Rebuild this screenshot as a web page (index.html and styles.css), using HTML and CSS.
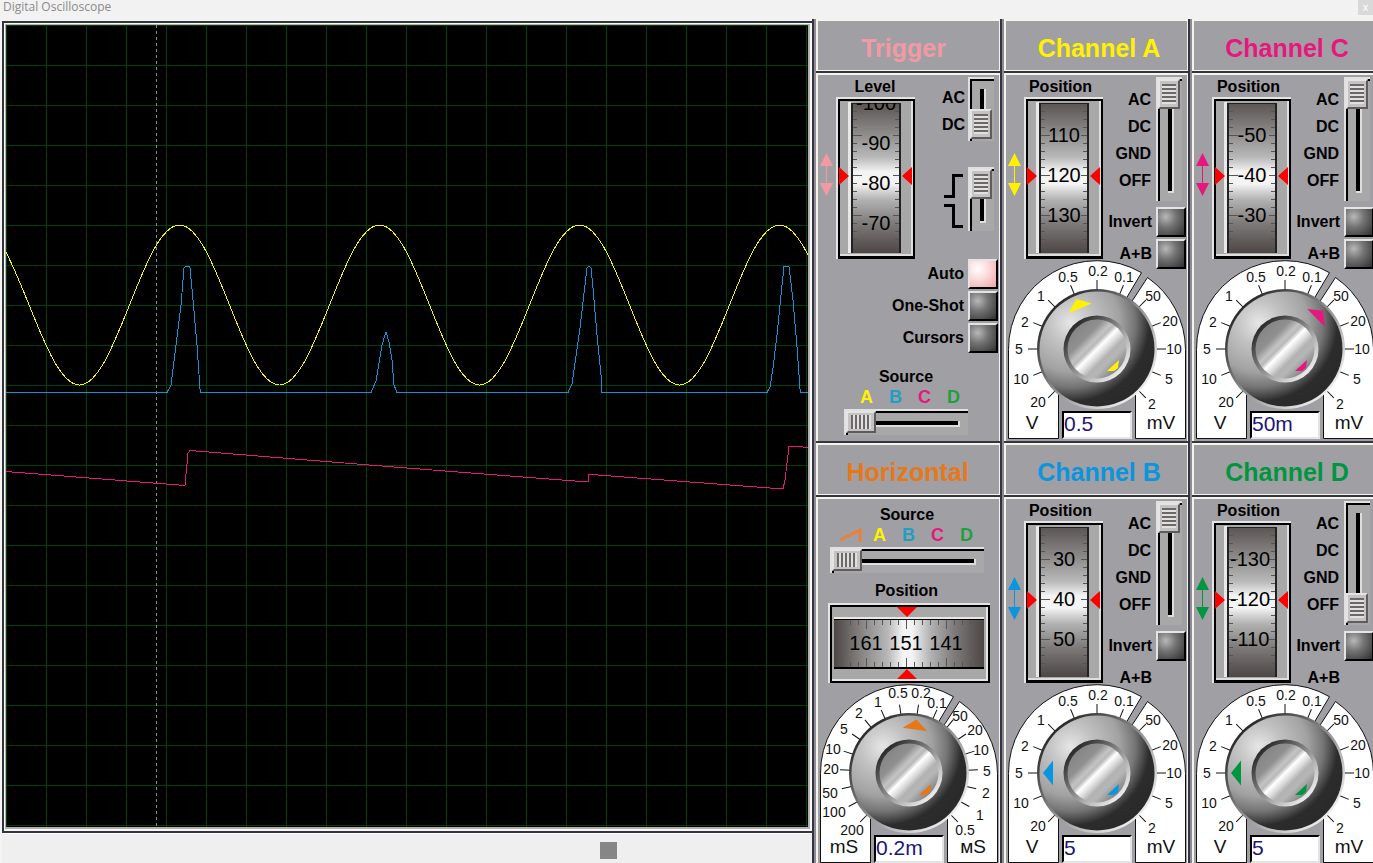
FILE: index.html
```html
<!DOCTYPE html>
<html lang="en">
<head>
<meta charset="utf-8">
<title>Digital Oscilloscope</title>
<link rel="stylesheet" href="styles.css">
</head>
<body>
<svg class="defs" aria-hidden="true">
  <defs>
    <pattern id="grid" width="40" height="40" patternUnits="userSpaceOnUse">
      <path d="M0 0H40V1H1V40H0Z" fill="#004000"/>
    </pattern>
    <linearGradient id="drum-v" x1="0" y1="0" x2="0" y2="1">
      <stop offset="0" stop-color="#5a5452"/><stop offset=".2" stop-color="#8c8a89"/><stop offset=".36" stop-color="#b8b8b8"/>
      <stop offset=".46" stop-color="#f4f4f4"/><stop offset=".54" stop-color="#f4f4f4"/><stop offset=".64" stop-color="#b4b4b4"/>
      <stop offset=".8" stop-color="#7e7b7a"/><stop offset="1" stop-color="#4c4644"/>
    </linearGradient>
    <linearGradient id="drum-h" x1="0" y1="0" x2="1" y2="0">
      <stop offset="0" stop-color="#4c4644"/><stop offset=".2" stop-color="#8c8a89"/><stop offset=".36" stop-color="#b8b8b8"/>
      <stop offset=".46" stop-color="#f4f4f4"/><stop offset=".52" stop-color="#f4f4f4"/><stop offset=".64" stop-color="#b4b4b4"/>
      <stop offset=".8" stop-color="#7e7b7a"/><stop offset="1" stop-color="#4c4644"/>
    </linearGradient>
    <radialGradient id="knob-body" cx=".27" cy=".27" r=".78">
      <stop offset="0" stop-color="#e6e6e6"/><stop offset=".25" stop-color="#c2c2c2"/><stop offset=".55" stop-color="#a2a2a2"/>
      <stop offset=".72" stop-color="#757575"/><stop offset=".88" stop-color="#2c2c2c"/><stop offset="1" stop-color="#2a2a2a"/>
    </radialGradient>
    <linearGradient id="ring" x1=".15" y1=".15" x2=".85" y2=".85">
      <stop offset="0" stop-color="#2a2a2a"/><stop offset=".5" stop-color="#8e8e8e"/><stop offset="1" stop-color="#ececec"/>
    </linearGradient>
    <linearGradient id="cap" x1=".15" y1=".15" x2=".85" y2=".85">
      <stop offset="0" stop-color="#868686"/><stop offset=".22" stop-color="#909090"/><stop offset=".36" stop-color="#c4c4c4"/>
      <stop offset=".42" stop-color="#b8b8b8"/><stop offset=".5" stop-color="#ffffff"/><stop offset=".6" stop-color="#dcdcdc"/>
      <stop offset=".7" stop-color="#b2b2b2"/><stop offset=".8" stop-color="#b6b6b6"/><stop offset="1" stop-color="#858585"/>
    </linearGradient>
    <clipPath id="drum-clip"><rect x="15" y="6" width="50" height="150"/></clipPath>

    <symbol id="updown" viewBox="0 0 13 43">
      <path d="M6.500 0L13 13H0ZM6.500 43L0 30H13Z" fill="currentColor"/><path d="M6.500 12V31" stroke="currentColor"/>
    </symbol>

    <g id="drum-frame" shape-rendering="crispEdges">
      <rect width="79" height="162" fill="#e4e4e4"/>
      <rect x="2" y="2" width="77" height="160" fill="#000"/>
      <rect x="4" y="4" width="73" height="155" fill="#dedede"/>
      <rect x="4" y="4" width="71" height="153" fill="#a8a8a8"/>
      <rect x="12" y="5" width="3" height="151" fill="#e8e8e8"/>
      <rect x="15" y="6" width="50" height="150" fill="url(#drum-v)"/>
      <path d="M15 6H17V156H15ZM63 6H65V156H63ZM15 6H65V7H15Z" fill="#222"/>
    </g>
    <g id="drum-marks" stroke="#555" shape-rendering="crispEdges">
      <path d="M17 14.500h4M17 22.500h4M17 30.500h4M17 38.500h9M17 46.500h4M17 54.500h4M17 62.500h4M17 70.500h4M17 78.500h9M17 86.500h4M17 94.500h4M17 102.500h4M17 110.500h4M17 118.500h9M17 126.500h4M17 134.500h4M17 142.500h4M17 150.500h4"/>
      <path d="M63 14.500h-4M63 22.500h-4M63 30.500h-4M63 38.500h-6M63 46.500h-4M63 54.500h-4M63 62.500h-4M63 70.500h-4M63 78.500h-6M63 86.500h-4M63 94.500h-4M63 102.500h-4M63 110.500h-4M63 118.500h-6M63 126.500h-4M63 134.500h-4M63 142.500h-4M63 150.500h-4"/>
    </g>
    <path id="drum-pointers" d="M3 70L13 79L3 88ZM76 70L66 79L76 88Z" fill="#f00"/>

    <g id="dial-plate" fill="#fff" stroke="#111">
      <path d="M1.500 178.500V89.500A88.500 88.500 0 0 1 134.500 12.700L119.500 38L90 89L51.500 130V178.500Z"/>
      <path d="M140.500 17.500A88.500 88.500 0 0 1 178.500 89.500V178.500H128.500V130L90 89L124.500 42Z"/>
    </g>
    <g id="knob">
      <circle cx="90" cy="89" r="60" fill="url(#ring)"/>
      <circle cx="90" cy="89" r="57.500" fill="url(#knob-body)"/>
      <circle cx="90" cy="89" r="33.500" fill="url(#ring)"/>
      <circle cx="90" cy="89" r="29.500" fill="url(#cap)"/>
      <path d="M100 111L112 100L111 108L107 111Z" fill="currentColor"/>
    </g>
    <g id="volt-ticks" stroke="#111">
      <path id="tick" d="M90 20V31"/>
      <use href="#tick" transform="rotate(22.500 90 89)"/><use href="#tick" transform="rotate(45 90 89)"/>
      <use href="#tick" transform="rotate(67.500 90 89)"/><use href="#tick" transform="rotate(90 90 89)"/>
      <use href="#tick" transform="rotate(112.500 90 89)"/><use href="#tick" transform="rotate(135 90 89)"/>
      <use href="#tick" transform="rotate(-22.500 90 89)"/><use href="#tick" transform="rotate(-45 90 89)"/>
      <use href="#tick" transform="rotate(-67.500 90 89)"/><use href="#tick" transform="rotate(-90 90 89)"/>
      <use href="#tick" transform="rotate(-112.500 90 89)"/><use href="#tick" transform="rotate(-135 90 89)"/>
    </g>
    <path id="pointer" d="M90 35L102.500 45H77.500Z" fill="currentColor"/>
  </defs>
</svg>

<header class="titlebar">
  <h1>Digital Oscilloscope</h1>
  <button class="close" type="button" aria-label="Close">x</button>
</header>

<main class="instrument">
  <section class="scope" aria-label="Screen">
    <div class="screen">
      <svg class="plot" role="img" aria-label="Waveforms">
        <rect width="100%" height="100%" fill="url(#grid)"/>
        <g transform="translate(-6 -25)" fill="none" shape-rendering="crispEdges">
          <path d="M156.500 25V827" stroke="#8a8a8a" stroke-dasharray="3 3"/>
          <path stroke="#fff200" d="M-21 225C15 225 43 385 79.500 385S143 225 179.500 225S243 385 279.500 385S343 225 379.500 225S443 385 479.500 385S543 225 579.500 225S643 385 679.500 385S743 225 779.500 225S843 385 879.500 385"/>
          <path stroke="#0a95de" d="M6 392.500H167L171 385L176 345L181 305L184 268L186 266.500H189L190 268L193 300L197 345L200 389L201 392.500H371L376 381L382 345L386 332L389 342L392 360L394 385L397 392.500H568L572 384L575 363L580 328L585 285L587 268L589 266L591 268L593 288L597 335L601 375L602 392.500H767L770 387L773 368L777 335L781 295L784 266.500H789L793 300L797 347L800 389L801 392.500H808"/>
          <path stroke="#e6177d" d="M6 471.500L185 485.500L188 453L190 450.500L400 467.500L588 482L589 474L591 474.500L783 489L785 480L789 446.500H798L808 447.500"/>
        </g>
      </svg>
    </div>
    <div class="scrollbar"><input type="range" min="0" max="793" value="598" aria-label="Screen scroll"></div>
  </section>

  <section class="panel trigger">
    <h2>Trigger</h2>
    <div class="panel-body">
      <div class="controls">
        <svg class="updown" aria-hidden="true"><use href="#updown"/></svg>
        <div class="level">
          <h3>Level</h3>
          <svg class="drum" viewBox="0 0 79 162" role="slider" aria-label="Trigger level" aria-valuenow="-80">
            <use href="#drum-frame"/><use href="#drum-marks"/>
            <g clip-path="url(#drum-clip)" class="drum-text"><text x="40" y="13">-100</text><text x="40" y="53">-90</text><text x="40" y="93">-80</text><text x="40" y="133">-70</text></g>
            <use href="#drum-pointers"/>
          </svg>
        </div>
        <div class="side">
          <div class="switch">
            <div class="switch-labels"><span>AC</span><span>DC</span></div>
            <input class="v-slider short" type="range" min="0" max="1" value="1" aria-label="Trigger coupling">
          </div>
          <div class="switch">
            <svg class="edges" viewBox="0 0 20 56" aria-hidden="true"><path d="M19 2.500H9.500V23.500H0M0 32.500H9.500V53.500H19" fill="none" stroke="#000" stroke-width="3"/></svg>
            <input class="v-slider short" type="range" min="0" max="1" value="0" aria-label="Trigger edge">
          </div>
        </div>
      </div>
      <div class="toggles">
        <label>Auto<input type="checkbox" checked></label>
        <label>One-Shot<input type="checkbox"></label>
        <label>Cursors<input type="checkbox"></label>
      </div>
      <div class="source">
        <h3>Source</h3>
        <div class="source-names"><span class="a">A</span><span class="b">B</span><span class="c">C</span><span class="d">D</span></div>
        <input class="h-slider" type="range" min="0" max="3" value="0" aria-label="Trigger source">
      </div>
    </div>
  </section>

  <section class="panel channel-a">
    <h2>Channel A</h2>
    <div class="panel-body">
      <div class="controls">
        <svg class="updown" aria-hidden="true"><use href="#updown"/></svg>
        <div class="level">
          <h3>Position</h3>
          <svg class="drum" viewBox="0 0 79 162" role="slider" aria-label="Channel A position" aria-valuenow="120">
            <use href="#drum-frame"/><use href="#drum-marks"/>
            <g class="drum-text"><text x="40" y="45">110</text><text x="40" y="85">120</text><text x="40" y="125">130</text></g>
            <use href="#drum-pointers"/>
          </svg>
        </div>
        <div class="side">
          <div class="switch">
            <div class="switch-labels"><span>AC</span><span>DC</span><span>GND</span><span>OFF</span></div>
            <input class="v-slider" type="range" min="0" max="3" value="0" aria-label="Channel A coupling">
          </div>
          <div class="toggles">
            <label>Invert<input type="checkbox"></label>
            <label>A+B<input type="checkbox"></label>
          </div>
        </div>
      </div>
      <div class="dial">
        <svg viewBox="0 0 180 179" role="img" aria-label="Channel A scale">
          <use href="#dial-plate"/><use href="#volt-ticks"/><use href="#knob"/><use href="#pointer" transform="rotate(-22.500 90 89)"/>
          <g class="dial-text"><text x="31" y="147">20</text><text x="14" y="124">10</text><text x="12" y="94">5</text><text x="18" y="67">2</text><text x="34" y="41">1</text><text x="61" y="22">0.5</text><text x="91" y="16">0.2</text><text x="117" y="22">0.1</text><text x="146" y="41">50</text><text x="163" y="66">20</text><text x="167" y="94">10</text><text x="162" y="124">5</text><text x="145" y="149">2</text></g>
          <g class="dial-unit"><text x="25" y="169">V</text><text x="154" y="169">mV</text></g>
        </svg>
        <input type="text" value="0.5" aria-label="Channel A volts per division">
      </div>
    </div>
  </section>

  <section class="panel channel-c">
    <h2>Channel C</h2>
    <div class="panel-body">
      <div class="controls">
        <svg class="updown" aria-hidden="true"><use href="#updown"/></svg>
        <div class="level">
          <h3>Position</h3>
          <svg class="drum" viewBox="0 0 79 162" role="slider" aria-label="Channel C position" aria-valuenow="-40">
            <use href="#drum-frame"/><use href="#drum-marks"/>
            <g class="drum-text"><text x="40" y="45">-50</text><text x="40" y="85">-40</text><text x="40" y="125">-30</text></g>
            <use href="#drum-pointers"/>
          </svg>
        </div>
        <div class="side">
          <div class="switch">
            <div class="switch-labels"><span>AC</span><span>DC</span><span>GND</span><span>OFF</span></div>
            <input class="v-slider" type="range" min="0" max="3" value="0" aria-label="Channel C coupling">
          </div>
          <div class="toggles">
            <label>Invert<input type="checkbox"></label>
            <label>A+B<input type="checkbox"></label>
          </div>
        </div>
      </div>
      <div class="dial">
        <svg viewBox="0 0 180 179" role="img" aria-label="Channel C scale">
          <use href="#dial-plate"/><use href="#volt-ticks"/><use href="#knob"/><use href="#pointer" transform="rotate(45 90 89)"/>
          <g class="dial-text"><text x="31" y="147">20</text><text x="14" y="124">10</text><text x="12" y="94">5</text><text x="18" y="67">2</text><text x="34" y="41">1</text><text x="61" y="22">0.5</text><text x="91" y="16">0.2</text><text x="117" y="22">0.1</text><text x="146" y="41">50</text><text x="163" y="66">20</text><text x="167" y="94">10</text><text x="162" y="124">5</text><text x="145" y="149">2</text></g>
          <g class="dial-unit"><text x="25" y="169">V</text><text x="154" y="169">mV</text></g>
        </svg>
        <input type="text" value="50m" aria-label="Channel C volts per division">
      </div>
    </div>
  </section>

  <section class="panel horizontal">
    <h2>Horizontal</h2>
    <div class="panel-body">
      <div class="source">
        <h3>Source</h3>
        <div class="source-names">
          <span><svg viewBox="0 0 22 14" aria-hidden="true"><path d="M0 12L20 2V14" fill="none" stroke="#e8813a" stroke-width="3"/></svg></span>
          <span class="a">A</span><span class="b">B</span><span class="c">C</span><span class="d">D</span>
        </div>
        <input class="h-slider" type="range" min="0" max="4" value="0" aria-label="Horizontal source">
      </div>
      <div class="level">
        <h3>Position</h3>
        <svg class="drum-wide" viewBox="0 0 162 80" role="slider" aria-label="Horizontal position" aria-valuenow="151">
          <g shape-rendering="crispEdges">
            <rect width="162" height="80" fill="#e4e4e4"/><rect x="2" y="2" width="160" height="78" fill="#000"/>
            <rect x="4" y="4" width="156" height="74" fill="#e4e4e4"/><rect x="4" y="4" width="154" height="72" fill="#a8a8a8"/>
            <path d="M6 14H156V16H6Z" fill="#e8e8e8"/>
            <rect x="6" y="16" width="150" height="50" fill="url(#drum-h)"/>
            <path d="M6 16H156V17H6ZM6 64H156V66H6Z" fill="#000"/>
            <path stroke="#555" d="M14.500 17v5M22.500 17v5M30.500 17v5M38.500 17v9M46.500 17v5M54.500 17v5M62.500 17v5M70.500 17v5M78.500 17v9M86.500 17v5M94.500 17v5M102.500 17v5M110.500 17v5M118.500 17v9M126.500 17v5M134.500 17v5M142.500 17v5M150.500 17v5M14.500 64v-5M22.500 64v-5M30.500 64v-5M38.500 64v-9M46.500 64v-5M54.500 64v-5M62.500 64v-5M70.500 64v-5M78.500 64v-9M86.500 64v-5M94.500 64v-5M102.500 64v-5M110.500 64v-5M118.500 64v-9M126.500 64v-5M134.500 64v-5M142.500 64v-5M150.500 64v-5"/>
          </g>
          <g class="drum-text"><text x="38" y="47">161</text><text x="78" y="47">151</text><text x="118" y="47">141</text></g>
          <path d="M69 4H89L79 14ZM69 76H89L79 66Z" fill="#f00"/>
        </svg>
      </div>
      <div class="dial">
        <svg viewBox="0 0 180 179" role="img" aria-label="Time base">
          <use href="#dial-plate"/>
          <g stroke="#111">
            <use href="#tick" transform="rotate(7.900 90 89)"/><use href="#tick" transform="rotate(23.800 90 89)"/><use href="#tick" transform="rotate(39.700 90 89)"/>
            <use href="#tick" transform="rotate(55.600 90 89)"/><use href="#tick" transform="rotate(71.500 90 89)"/><use href="#tick" transform="rotate(87.400 90 89)"/>
            <use href="#tick" transform="rotate(103.200 90 89)"/><use href="#tick" transform="rotate(119.100 90 89)"/><use href="#tick" transform="rotate(135 90 89)"/>
            <use href="#tick" transform="rotate(-7.900 90 89)"/><use href="#tick" transform="rotate(-23.800 90 89)"/><use href="#tick" transform="rotate(-39.700 90 89)"/>
            <use href="#tick" transform="rotate(-55.600 90 89)"/><use href="#tick" transform="rotate(-71.500 90 89)"/><use href="#tick" transform="rotate(-87.400 90 89)"/>
            <use href="#tick" transform="rotate(-103.200 90 89)"/><use href="#tick" transform="rotate(-119.100 90 89)"/><use href="#tick" transform="rotate(-135 90 89)"/>
          </g>
          <use href="#knob"/><use href="#pointer" transform="rotate(7.900 90 89)"/>
          <g class="dial-text"><text x="33" y="151">200</text><text x="15" y="133">100</text><text x="11" y="114">50</text><text x="12" y="90">20</text><text x="14" y="70">10</text><text x="25" y="50">5</text><text x="40" y="34">2</text><text x="59" y="23">1</text><text x="79" y="14">0.5</text><text x="102" y="14">0.2</text><text x="118" y="24">0.1</text><text x="141" y="37">50</text><text x="156" y="51">20</text><text x="162" y="71">10</text><text x="168" y="92">5</text><text x="167" y="114">2</text><text x="161" y="136">1</text><text x="146" y="151">0.5</text></g>
          <g class="dial-unit"><text x="25" y="169">mS</text><text x="154" y="169">мS</text></g>
        </svg>
        <input type="text" value="0.2m" aria-label="Time per division">
      </div>
    </div>
  </section>

  <section class="panel channel-b">
    <h2>Channel B</h2>
    <div class="panel-body">
      <div class="controls">
        <svg class="updown" aria-hidden="true"><use href="#updown"/></svg>
        <div class="level">
          <h3>Position</h3>
          <svg class="drum" viewBox="0 0 79 162" role="slider" aria-label="Channel B position" aria-valuenow="40">
            <use href="#drum-frame"/><use href="#drum-marks"/>
            <g class="drum-text"><text x="40" y="45">30</text><text x="40" y="85">40</text><text x="40" y="125">50</text></g>
            <use href="#drum-pointers"/>
          </svg>
        </div>
        <div class="side">
          <div class="switch">
            <div class="switch-labels"><span>AC</span><span>DC</span><span>GND</span><span>OFF</span></div>
            <input class="v-slider" type="range" min="0" max="3" value="0" aria-label="Channel B coupling">
          </div>
          <div class="toggles">
            <label>Invert<input type="checkbox"></label>
            <span class="no-box">A+B</span>
          </div>
        </div>
      </div>
      <div class="dial">
        <svg viewBox="0 0 180 179" role="img" aria-label="Channel B scale">
          <use href="#dial-plate"/><use href="#volt-ticks"/><use href="#knob"/><use href="#pointer" transform="rotate(-90 90 89)"/>
          <g class="dial-text"><text x="31" y="147">20</text><text x="14" y="124">10</text><text x="12" y="94">5</text><text x="18" y="67">2</text><text x="34" y="41">1</text><text x="61" y="22">0.5</text><text x="91" y="16">0.2</text><text x="117" y="22">0.1</text><text x="146" y="41">50</text><text x="163" y="66">20</text><text x="167" y="94">10</text><text x="162" y="124">5</text><text x="145" y="149">2</text></g>
          <g class="dial-unit"><text x="25" y="169">V</text><text x="154" y="169">mV</text></g>
        </svg>
        <input type="text" value="5" aria-label="Channel B volts per division">
      </div>
    </div>
  </section>

  <section class="panel channel-d">
    <h2>Channel D</h2>
    <div class="panel-body">
      <div class="controls">
        <svg class="updown" aria-hidden="true"><use href="#updown"/></svg>
        <div class="level">
          <h3>Position</h3>
          <svg class="drum" viewBox="0 0 79 162" role="slider" aria-label="Channel D position" aria-valuenow="-120">
            <use href="#drum-frame"/><use href="#drum-marks"/>
            <g class="drum-text"><text x="38" y="45">-130</text><text x="38" y="85">-120</text><text x="38" y="125">-110</text></g>
            <use href="#drum-pointers"/>
          </svg>
        </div>
        <div class="side">
          <div class="switch">
            <div class="switch-labels"><span>AC</span><span>DC</span><span>GND</span><span>OFF</span></div>
            <input class="v-slider" type="range" min="0" max="3" value="3" aria-label="Channel D coupling">
          </div>
          <div class="toggles">
            <label>Invert<input type="checkbox"></label>
            <span class="no-box">A+B</span>
          </div>
        </div>
      </div>
      <div class="dial">
        <svg viewBox="0 0 180 179" role="img" aria-label="Channel D scale">
          <use href="#dial-plate"/><use href="#volt-ticks"/><use href="#knob"/><use href="#pointer" transform="rotate(-90 90 89)"/>
          <g class="dial-text"><text x="31" y="147">20</text><text x="14" y="124">10</text><text x="12" y="94">5</text><text x="18" y="67">2</text><text x="34" y="41">1</text><text x="61" y="22">0.5</text><text x="91" y="16">0.2</text><text x="117" y="22">0.1</text><text x="146" y="41">50</text><text x="163" y="66">20</text><text x="167" y="94">10</text><text x="162" y="124">5</text><text x="145" y="149">2</text></g>
          <g class="dial-unit"><text x="25" y="169">V</text><text x="154" y="169">mV</text></g>
        </svg>
        <input type="text" value="5" aria-label="Channel D volts per division">
      </div>
    </div>
  </section>
</main>
</body>
</html>
```
FILE: styles.css
```css
* { box-sizing: border-box; }

body {
  margin: 0;
  height: 100vh;
  overflow: hidden;
  display: flex;
  flex-direction: column;
  background: #efefef;
  font-family: "Liberation Sans", Arial, sans-serif;
  font-size: 16px;
  color: #000;
}

h1, h2, h3 { margin: 0; }
svg { display: block; }
input, button { margin: 0; font-family: inherit; }
.defs { position: absolute; width: 0; height: 0; }

/* Title bar */
.titlebar {
  flex: none;
  display: flex;
  justify-content: space-between;
  align-items: flex-start;
  height: 19px;
  padding-left: 3px;
  background: #f2f2f2;
}
.titlebar h1 {
  font: 400 12px/14px "Open Sans", "Noto Sans", sans-serif;
  color: #8a8a8a;
}
.close {
  width: 15px;
  height: 15px;
  padding: 0 0 2px;
  border: 0;
  background: #d9d9d9;
  color: #fff;
  font-size: 11px;
  line-height: 12px;
}

/* The last column runs slightly past the window edge */
.instrument {
  flex: 1;
  min-height: 0;
  display: grid;
  grid-template-columns: minmax(0, 1fr) repeat(3, 188px);
  grid-template-rows: 424px 424px;
  margin-right: -5px;
}

/* Screen */
.scope {
  grid-row: 1 / 3;
  display: flex;
  flex-direction: column;
  height: calc(100vh - 19px);
  padding: 2px 0 0 2px;
  border-right: 2px solid #343440;
  background: #f4f4f0;
}
.screen {
  flex: 1;
  min-height: 0;
  padding: 1px 2px 2px 1px;
  border: solid #343440;
  border-width: 2px 0 2px 2px;
  background: #f8f8f4;
}
.plot {
  width: 100%;
  height: 100%;
  border: solid #b4b0b4;
  border-width: 1px 2px 2px 1px;
  background: #000;
}
.scrollbar {
  flex: none;
  height: 30px;
  padding-top: 8px;
  border-top: 1px solid #fff;
  background: #efefef;
}
.scrollbar input {
  appearance: none;
  display: block;
  width: 100%;
  height: 17px;
  background: transparent;
}
.scrollbar input::-webkit-slider-thumb {
  appearance: none;
  width: 17px;
  height: 17px;
  background: #868686;
}

/* Panels */
.panel {
  display: flex;
  flex-direction: column;
  padding-bottom: 2px;
  border-left: 2px solid #8f8b96;
  border-right: 2px solid #343440;
  background: #343440;
}
.trigger { color: #f29aa4; }
.horizontal { color: #e67817; }
.channel-a { color: #fff200; }
.channel-b { color: #0a95de; }
.channel-c { color: #e6177d; }
.channel-d { color: #009640; }

.panel h2 {
  height: 52px;
  margin-bottom: 2px;
  padding: 5px 0 0 5px;
  border: solid #f4f4ea;
  border-width: 2px 1px 1px 2px;
  background: #a09fa4;
  font-size: 25px;
  line-height: 44px;
  text-align: center;
}
.panel.trigger h2 { padding: 5px 10px 0 0; }
.panel.horizontal h2 { padding: 5px 2px 0 0; }

.panel-body {
  flex: 1;
  display: flex;
  flex-direction: column;
  padding: 0 1px 0 2px;
  border: solid #f4f4ea;
  border-width: 2px 1px 0 2px;
  background: #a09fa4;
}
.panel h3 {
  color: #000;
  font-size: 16px;
  line-height: 20px;
  text-align: center;
}

.controls {
  display: flex;
  align-items: flex-start;
}
.updown {
  width: 13px;
  height: 43px;
  margin-top: 78px;
}
.level { margin-left: 3px; }
.controls h3 {
  padding: 2px 8px 0 0;
  margin-right: -2px;
}
.trigger .controls h3 { padding-right: 3px; }
.drum {
  width: 79px;
  height: 162px;
}
.drum-text text {
  fill: #000;
  font-size: 20px;
  text-anchor: middle;
}

.side {
  flex: 1;
  display: flex;
  flex-direction: column;
  gap: 6px;
  padding-top: 2px;
}
.trigger .side { gap: 26px; }
.switch {
  display: flex;
  justify-content: flex-end;
  gap: 5px;
  padding-right: 4px;
}
.trigger .switch { gap: 3px; }
.switch-labels {
  display: flex;
  flex-direction: column;
  align-items: flex-end;
  padding-top: 9px;
  color: #000;
  font-weight: 700;
  line-height: 27px;
}
.trigger .switch-labels { padding-top: 7px; }
.edges {
  width: 20px;
  height: 56px;
  margin: 6px 1px 0 0;
}

/* Slide switches */
.v-slider, .h-slider {
  appearance: none;
  display: block;
  border: solid #e0e0e0;
}
.v-slider {
  writing-mode: vertical-lr;
  width: 26px;
  height: 124px;
  padding: 0 2px 2px 0;
  border-width: 2px 0 0 2px;
  background:
    linear-gradient(#000, #000) 0 0 / 2px 100% no-repeat,
    linear-gradient(#000, #000) 0 0 / 100% 2px no-repeat,
    linear-gradient(#000, #000) 10px 10px / 4px calc(100% - 20px) no-repeat,
    linear-gradient(#ddd, #ddd) 10px 10px / 6px calc(100% - 18px) no-repeat,
    #a8a8a8;
}
.v-slider.short { height: 64px; }
.v-slider::-webkit-slider-thumb {
  appearance: none;
  width: 22px;
  height: 30px;
  border: 2px solid;
  border-color: #e4e4e4 #605c5c #605c5c #e4e4e4;
  background:
    repeating-linear-gradient(#6c6868 0 2px, #e0e0e0 2px 4px) center / 14px 20px no-repeat,
    #c4c2c2;
}
.h-slider {
  width: 124px;
  height: 26px;
  padding: 0 2px 2px 0;
  border-width: 2px 0 0 2px;
  background:
    linear-gradient(#000, #000) 0 0 / 100% 2px no-repeat,
    linear-gradient(#000, #000) 0 0 / 2px 100% no-repeat,
    linear-gradient(#000, #000) 10px 10px / calc(100% - 20px) 4px no-repeat,
    linear-gradient(#ddd, #ddd) 10px 10px / calc(100% - 18px) 6px no-repeat,
    #a8a8a8;
}
.h-slider::-webkit-slider-thumb {
  appearance: none;
  width: 30px;
  height: 22px;
  border: 2px solid;
  border-color: #e4e4e4 #605c5c #605c5c #e4e4e4;
  background:
    repeating-linear-gradient(90deg, #6c6868 0 2px, #e0e0e0 2px 4px) center / 20px 14px no-repeat,
    #c4c2c2;
}

/* Push buttons */
.toggles {
  display: flex;
  flex-direction: column;
  align-items: flex-end;
  gap: 2px;
  color: #000;
  font-weight: 700;
}
.toggles label, .no-box {
  display: flex;
  align-items: center;
  gap: 4px;
  height: 30px;
}
.no-box { padding-right: 34px; }
.toggles input {
  appearance: none;
  width: 30px;
  height: 30px;
  border: 2px solid;
  border-color: #e4e4e4 #000 #000 #e4e4e4;
  background: radial-gradient(circle at 30% 30%, #b8b8b8, #747474 40%, #302e2e 100%);
}
.toggles input:checked {
  background: radial-gradient(circle at 30% 30%, #fff, #fbd8d8 45%, #f0a4a8 100%);
}

/* Source selectors */
.source {
  width: 124px;
  margin: 14px 0 0 24px;
}
.source-names {
  display: flex;
  justify-content: flex-end;
  margin-bottom: 2px;
  font-size: 18px;
  font-weight: 700;
  line-height: 20px;
}
.source-names span {
  width: 29px;
  text-align: center;
}
.source-names svg {
  width: 22px;
  height: 14px;
  margin: 3px auto 0;
}
.a { color: #fff200; }
.b { color: #1f9fc4; }
.c { color: #e6177d; }
.d { color: #1fa040; }

.horizontal .source {
  width: 154px;
  margin: 6px 0 0 10px;
}
.horizontal .source-names { padding-right: 3px; }
.horizontal .h-slider { width: 154px; }
.horizontal .level { margin: 8px 8px 10px; }
.horizontal .level h3 { padding-right: 5px; }
.drum-wide {
  width: 162px;
  height: 80px;
  margin-top: 2px;
}

/* Dials: the read-out sits in the opening at the foot of the scale */
.dial {
  display: grid;
  justify-items: center;
  align-items: end;
  width: 180px;
  margin: -9px 0 0 -1px;
}
.dial > * { grid-area: 1 / 1; }
.dial svg {
  width: 180px;
  height: 179px;
}
.dial-text text {
  fill: #111;
  font-size: 14px;
  text-anchor: middle;
}
.dial-unit text {
  fill: #111;
  font-size: 19px;
  text-anchor: middle;
}
.dial input {
  width: 70px;
  height: 28px;
  padding: 0 0 2px;
  border: 2px solid;
  border-color: #000 #e4e4e4 #e4e4e4 #000;
  border-radius: 0;
  background: #fff;
  color: #1c1478;
  font-size: 21px;
  line-height: 22px;
}
```
